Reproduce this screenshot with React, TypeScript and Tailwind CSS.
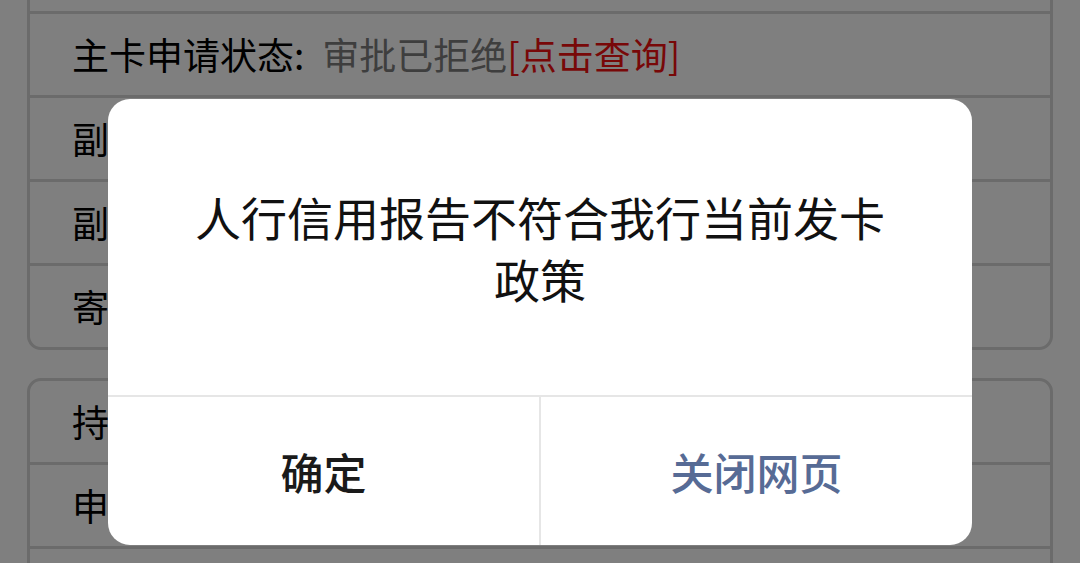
const font = { fontFamily: '"Noto Sans CJK SC", "Noto Sans", sans-serif' };

const Row = ({ children, last = false }: { children?: React.ReactNode; last?: boolean }) => (
  <div
    className={`flex items-center pl-[42px] text-[37px] text-black leading-none ${
      last ? "h-[81px]" : "h-[84px] border-b-[3px] border-[#d6d6d6]"
    }`}
  >
    {children}
  </div>
);

const App = () => {
  return (
    <div className="relative h-[563px] w-[1080px] overflow-hidden bg-white" style={font}>
      <div className="flex flex-col px-[27px]">
        <div className="-mt-[73px] rounded-[14px] border-[3px] border-[#d6d6d6]">
          <Row />
          <Row>
            <span>主卡申请状态:</span>
            <span className="ml-[18px] text-[#7c7c7c]">审批已拒绝</span>
            <span className="text-[#f01010]">[点击查询]</span>
          </Row>
          <Row>副卡申请状态:</Row>
          <Row>副卡寄送状态:</Row>
          <Row last>寄送地址:</Row>
        </div>

        <div className="mt-[28px] rounded-[14px] border-[3px] border-[#d6d6d6]">
          <Row>持卡人姓名:</Row>
          <Row>申请日期:</Row>
          <Row last />
        </div>
      </div>

      {/* mask + dialog */}
      <div className="absolute inset-0 flex items-start justify-center bg-black/50 pt-[99px]">
        <div className="flex h-[446px] w-[864px] flex-col overflow-hidden rounded-[22px] bg-white">
          <div className="flex flex-1 items-center justify-center px-[72px] text-center text-[46px] leading-[62px] text-[#111]">
            人行信用报告不符合我行当前发卡政策
          </div>
          <div className="flex h-[150px] border-t-2 border-[#e6e6e6]">
            <button className="flex flex-1 items-center justify-center border-r-2 border-[#e6e6e6] text-[43px] font-medium text-[#1a1a1a]">
              确定
            </button>
            <button className="flex flex-1 items-center justify-center text-[43px] font-medium text-[#576b95]">
              关闭网页
            </button>
          </div>
        </div>
      </div>
    </div>
  );
};

export default App;
